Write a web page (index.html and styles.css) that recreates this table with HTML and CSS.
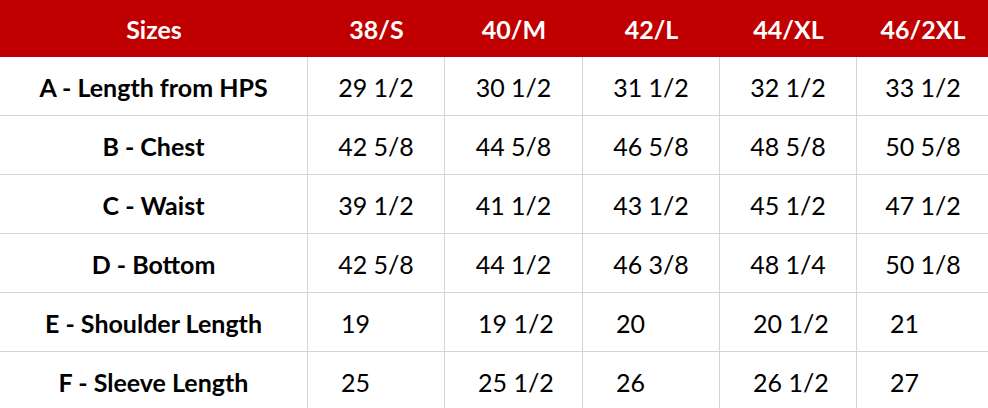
FILE: index.html
```html
<!DOCTYPE html>
<html>
<head>
<meta charset="utf-8">
<link rel="stylesheet" href="styles.css">
</head>
<body>
<div class="chart">
  <div class="h">Sizes</div><div class="h">38/S</div><div class="h">40/M</div><div class="h">42/L</div><div class="h">44/XL</div><div class="h">46/2XL</div>
  <div class="c lab">A - Length from HPS</div><div class="c">29 1/2</div><div class="c">30 1/2</div><div class="c">31 1/2</div><div class="c">32 1/2</div><div class="c">33 1/2</div>
  <div class="c lab">B - Chest</div><div class="c">42 5/8</div><div class="c">44 5/8</div><div class="c">46 5/8</div><div class="c">48 5/8</div><div class="c">50 5/8</div>
  <div class="c lab">C - Waist</div><div class="c">39 1/2</div><div class="c">41 1/2</div><div class="c">43 1/2</div><div class="c">45 1/2</div><div class="c">47 1/2</div>
  <div class="c lab">D - Bottom</div><div class="c">42 5/8</div><div class="c">44 1/2</div><div class="c">46 3/8</div><div class="c">48 1/4</div><div class="c">50 1/8</div>
  <div class="c lab">E - Shoulder Length</div><div class="c l">19</div><div class="c l">19 1/2</div><div class="c l">20</div><div class="c l">20 1/2</div><div class="c l">21</div>
  <div class="c lab">F - Sleeve Length</div><div class="c l">25</div><div class="c l">25 1/2</div><div class="c l">26</div><div class="c l">26 1/2</div><div class="c l">27</div>
</div>
</body>
</html>
```

FILE: styles.css
```css
html, body {
  margin: 0;
  padding: 0;
  background: #ffffff;
}
.chart {
  display: grid;
  grid-template-columns: 308px 137px 138px 137px 137px 132px;
  grid-template-rows: 57px repeat(6, 59px);
  font-family: Lato, "Open Sans", sans-serif;
  font-size: 25px;
  color: #000;
  overflow: hidden;
}
.h {
  background: #c00000;
  color: #fff;
  font-weight: 700;
  display: flex;
  align-items: center;
  justify-content: center;
  padding-bottom: 0;
}
.c {
  box-sizing: border-box;
  border-right: 1px solid #d4d4d4;
  border-bottom: 1px solid #d4d4d4;
  display: flex;
  align-items: center;
  justify-content: center;
  padding-top: 2px;
}
.c:nth-child(6n) {
  border-right: none;
}
.lab {
  font-weight: 700;
}
.l {
  justify-content: flex-start;
  padding-left: 33px;
}
```
